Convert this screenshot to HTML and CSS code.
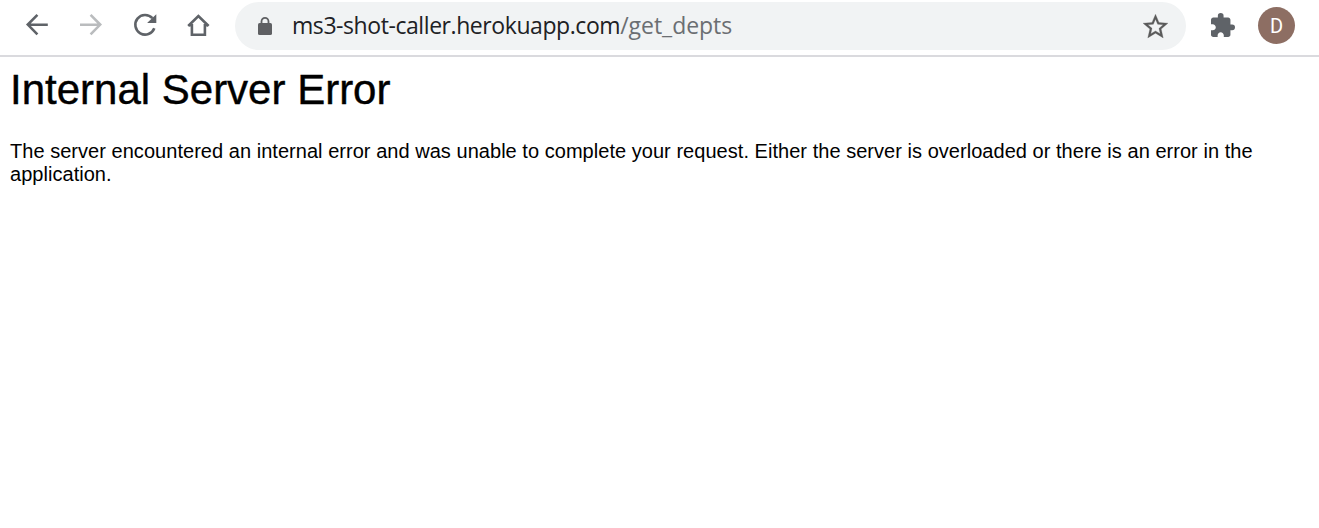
FILE: index.html
```html
<!DOCTYPE html>
<html lang="en">
<head>
<meta charset="utf-8">
<title>500 Internal Server Error</title>
<link rel="stylesheet" href="styles.css">
</head>
<body>
<header class="toolbar">
  <nav class="nav">
    <svg class="nav-icon" viewBox="0 0 54 50"><path d="M37.8 24.7H18M27.4 14.8 17.8 24.6l9.6 9.8"/></svg>
    <svg class="nav-icon disabled" viewBox="0 0 54 50"><path d="M16 24.7h20M26.6 14.8l9.6 9.8-9.6 9.8"/></svg>
    <svg class="nav-icon" viewBox="0 0 54 50"><path d="M34.4 18.2A9.8 9.8 0 1 0 36.3 28.2"/><path class="solid" d="M38.3 14.3V23h-9.2z"/></svg>
    <svg class="nav-icon" viewBox="0 0 54 50"><path d="M16.200 26 26.400 16l10.200 10M17 25.200h2.900v9.500h13v-9.500h2.900"/></svg>
  </nav>
  <div class="omnibox">
    <svg class="lock" viewBox="0 0 14 18"><rect x="0" y="6" width="14" height="12" rx="1.6"/><path d="M3.5 7V4.4a3.5 3.5 0 0 1 7 0V7"/></svg>
    <div class="url">ms3-shot-caller.herokuapp.com<span class="path">/get_depts</span></div>
    <svg class="star" viewBox="2 2 20 19"><path d="M22 9.24l-7.19-.62L12 2 9.19 8.63 2 9.24l5.46 4.73L5.82 21 12 17.27 18.18 21l-1.63-7.03L22 9.24zM12 15.4l-3.76 2.27 1-4.28-3.32-2.88 4.38-.38L12 6.1l1.71 4.04 4.38.38-3.32 2.88 1 4.28L12 15.4z"/></svg>
  </div>
  <svg class="puzzle" viewBox="2 1 21 21"><path d="M20.5 11H19V7c0-1.1-.9-2-2-2h-4V3.500a2.500 2.500 0 0 0-5 0V5H4c-1.100 0-1.990.9-1.990 2v3.800H3.500c1.490 0 2.700 1.210 2.700 2.700s-1.210 2.700-2.700 2.700H2V20c0 1.100.9 2 2 2h3.800v-1.500c0-1.490 1.210-2.700 2.700-2.700s2.700 1.210 2.700 2.700V22H17c1.100 0 2-.9 2-2v-4h1.500a2.500 2.500 0 0 0 0-5z"/></svg>
  <div class="avatar">D</div>
</header>
<main class="page">
  <h1 class="title">Internal Server Error</h1>
  <p class="message">The server encountered an internal error and was unable to complete your request. Either the server is overloaded or there is an error in the application.</p>
</main>
</body>
</html>
```
FILE: styles.css
```css
body { margin: 0; background: #fff; color: #000; }
.toolbar {
  display: flex;
  height: 55px;
  box-sizing: content-box;
  border-bottom: 2px solid #dadade;
}
.nav { display: flex; width: 225px; padding-left: 10px; flex: none; box-sizing: border-box; margin-right: 10px; }
.nav-icon {
  width: 54px;
  height: 50px;
  flex: none;
  fill: none;
  stroke: #5f6368;
  stroke-width: 2.6;
}
.nav-icon.disabled { stroke: #babcbe; }
.nav-icon .solid { fill: #5f6368; stroke: none; }
.omnibox {
  display: flex;
  align-items: center;
  width: 951px;
  height: 48px;
  margin-top: 2px;
  padding: 0 18px 0 23px;
  box-sizing: border-box;
  border-radius: 24px;
  background: #f1f3f4;
  flex: none;
}
.lock { width: 14px; height: 18px; flex: none; fill: #5f6063; }
.lock path { fill: none; stroke: #5f6063; stroke-width: 1.8; }
.url {
  flex: 1;
  margin: 0 0 2px 20px;
  font: 23px/32px "Open Sans", "Noto Sans", sans-serif;
  letter-spacing: -0.43px;
  color: #202124;
  white-space: nowrap;
}
.url .path { color: #6b6e72; letter-spacing: -0.03px; }
.star { width: 25px; height: 24px; margin-bottom: 1px; fill: #5a5a5a; stroke: #5a5a5a; stroke-width: 0.2; overflow: visible; }
.puzzle { width: 24px; height: 24px; margin: 13px 0 0 25px; fill: #5f6368; flex: none; }
.avatar {
  width: 37px;
  height: 37px;
  margin: 7px 0 0 23px;
  border-radius: 50%;
  background: #8d6e63;
  color: #fff;
  font: 20px/38px Roboto, sans-serif;
  text-align: center;
  flex: none;
}
.page { padding: 9px 10px 0; font-family: "Liberation Sans", Arial, sans-serif; }
.title { margin: 0 0 26px; font-size: 42px; line-height: 48px; font-weight: 400; -webkit-text-stroke: 0.4px #000; }
.message { margin: 0; font-size: 20px; line-height: 23px; letter-spacing: 0.037px; }
```
